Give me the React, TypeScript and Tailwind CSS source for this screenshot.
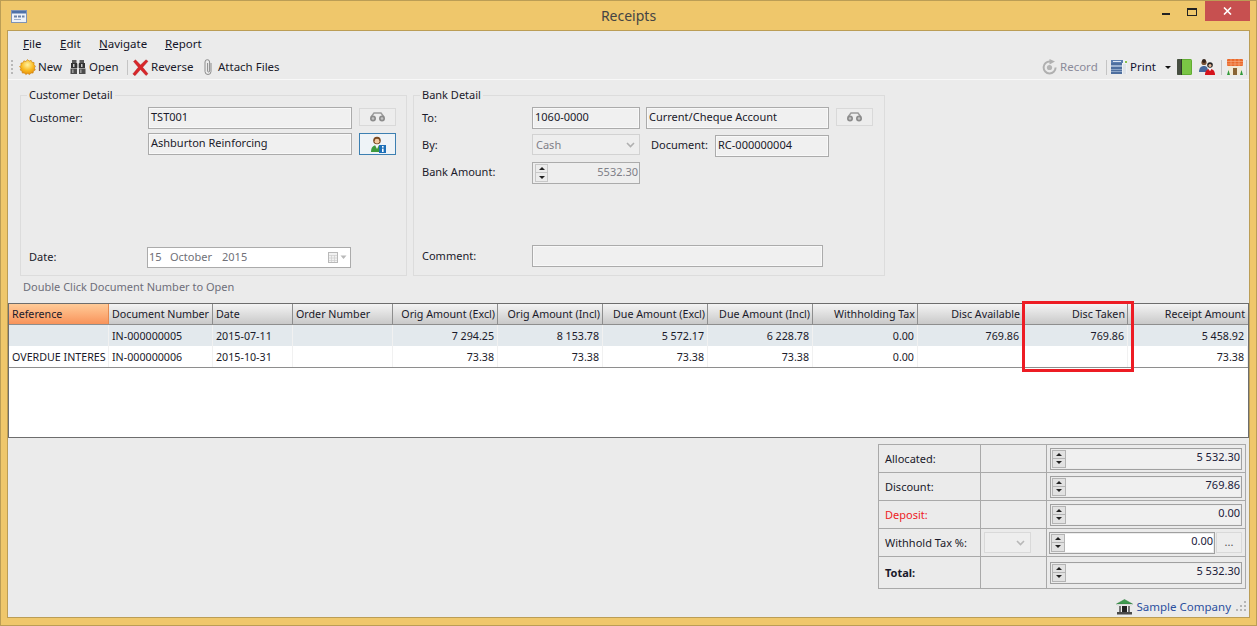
import React from "react";

const F = "[font-family:'Noto_Sans','Liberation_Sans',sans-serif]";

function Sun() {
  return (
    <svg width="17" height="17" viewBox="0 0 17 17">
      <defs>
        <radialGradient id="sg" cx="50%" cy="35%" r="70%">
          <stop offset="0" stopColor="#fff2a0" />
          <stop offset="0.55" stopColor="#f9b91f" />
          <stop offset="1" stopColor="#e0840c" />
        </radialGradient>
      </defs>
      <path d="M8.5 .5l1.6 1.6 2-.8.9 2 2.1.3-.1 2.2 1.5 1.5-1.2 1.7 1 2-1.9 1-.3 2.1-2.1-.1-1.4 1.6-1.9-1.1-1.9 1.1-1.4-1.6-2.1.1-.3-2.1-1.9-1 1-2L.5 7.8 2 6.3l-.1-2.2 2.1-.3.9-2 2 .8z" fill="url(#sg)" stroke="#c9800f" strokeWidth=".6" />
    </svg>
  );
}
function Binoculars() {
  return (
    <svg width="16" height="16" viewBox="0 0 16 16">
      <rect x="2" y="1" width="4.5" height="3" fill="#5a5a5a" />
      <rect x="9.5" y="1" width="4.5" height="3" fill="#5a5a5a" />
      <rect x="1" y="4" width="6" height="5" fill="#333" />
      <rect x="9" y="4" width="6" height="5" fill="#333" />
      <rect x="7" y="4.5" width="2" height="4.5" fill="#b5b5b5" />
      <rect x="3" y="5" width="1.5" height="3" fill="#c8c8c8" />
      <rect x="11" y="5" width="1.5" height="3" fill="#c8c8c8" />
      <rect x="0.5" y="9.5" width="6.5" height="5.5" fill="#4d4d4d" />
      <rect x="9" y="9.5" width="6.5" height="5.5" fill="#4d4d4d" />
      <rect x="2" y="10.5" width="1.6" height="3.5" fill="#999" />
      <rect x="10" y="10.5" width="1.6" height="3.5" fill="#999" />
    </svg>
  );
}
function RedX() {
  return (
    <svg width="17" height="17" viewBox="0 0 17 17">
      <path d="M1.5 2.5L3.5 .8 8.5 6 14 .8l2 1.5-5.3 6 5.3 6.5-2 1.7-5.5-6-5.5 6.2L.8 15l5.5-6.7z" fill="#d8262a" stroke="#a81a1c" strokeWidth=".4" />
    </svg>
  );
}
function Clip() {
  return (
    <svg width="10" height="16" viewBox="0 0 10 16" fill="none" stroke="#8c8c8c" strokeWidth="1">
      <path d="M8 4v8.5a3 3 0 0 1-6 0V3a2.3 2.3 0 0 1 4.6 0v9a1 1 0 0 1-2 0V4" />
    </svg>
  );
}
function RecordIcon() {
  return (
    <svg width="15" height="16" viewBox="0 0 15 16">
      <path d="M8 2.4a6 6 0 1 0 5.6 6" fill="none" stroke="#b0b0b0" strokeWidth="2" />
      <circle cx="7.5" cy="8.5" r="2.6" fill="#b4b4b4" />
      <path d="M7.5 0l5.5 2.6-5.5 2.9z" fill="#b0b0b0" />
    </svg>
  );
}
function PrintIcon() {
  return (
    <svg width="16" height="14" viewBox="0 0 16 14">
      <rect x="0" y="0" width="16" height="14" fill="#eef1f5" />
      <rect x="0" y="0" width="12" height="3" fill="#5d7fb0" />
      <rect x="2" y="1" width="8" height="1" fill="#dce6f2" />
      <rect x="0" y="3" width="11" height="11" fill="#4e6f9f" />
      <rect x="0" y="5" width="11" height="2" fill="#9db3d1" />
      <rect x="0" y="9" width="11" height="1" fill="#8ca5c7" />
      <rect x="0" y="11" width="11" height="1" fill="#8ca5c7" />
      <rect x="14" y="1" width="2" height="2" fill="#8bc34a" />
      <rect x="12" y="4" width="3" height="10" fill="#dfe3e8" />
    </svg>
  );
}
function BookIcon() {
  return (
    <svg width="15" height="16" viewBox="0 0 15 16">
      <rect x="0" y="0" width="15" height="16" rx="1.5" fill="#62ad33" />
      <rect x="0" y="0" width="4" height="16" rx="1" fill="#474f42" />
      <rect x="5" y="1" width="9" height="14" fill="#7ac545" />
      <rect x="4" y="0" width="1" height="16" fill="#2f3a2a" />
    </svg>
  );
}
function PeopleIcon() {
  return (
    <svg width="17" height="17" viewBox="0 0 17 17">
      <circle cx="5" cy="3.5" r="2.6" fill="#7a5234" />
      <circle cx="5" cy="2" r="2" fill="#33231a" />
      <path d="M0 13c0-4 2-6 5-6s4 2 4 6z" fill="#46679c" />
      <circle cx="11" cy="6" r="2.8" fill="#222" />
      <circle cx="11" cy="6.6" r="1.5" fill="#e9b896" />
      <path d="M6 16c0-4 2-6 5-6s5 2 5 6z" fill="#d5141c" />
      <rect x="10" y="9.5" width="2" height="2" fill="#f3f3f3" />
    </svg>
  );
}
function HouseIcon() {
  return (
    <svg width="16" height="16" viewBox="0 0 16 16">
      <rect x="1" y="7" width="14" height="9" fill="#f2ead6" />
      <rect x="0" y="0" width="16" height="7" rx="1" fill="#ea6a2c" />
      <path d="M0 2.5h16M0 5h16M4 0v7M8 0v7M12 0v7" stroke="#f8b48c" strokeWidth=".6" />
      <rect x="6" y="9" width="4" height="7" fill="#8a6434" />
      <path d="M0 16l1.5-5 1.5 5zM13 16l1.5-5 1.5 5z" fill="#2f9a3a" />
    </svg>
  );
}
function WinIcon() {
  return (
    <svg width="16" height="13" viewBox="0 0 16 13">
      <rect x=".5" y=".5" width="15" height="12" fill="#eef2f8" stroke="#7f93b5" />
      <rect x="1" y="1" width="14" height="2.5" fill="#4e71a8" />
      <rect x="3" y="5.5" width="3" height="2" fill="#6d83a8" />
      <rect x="7" y="5.5" width="3" height="2" fill="#6d83a8" />
      <rect x="11" y="5.5" width="2.5" height="2" fill="#6d83a8" />
      <rect x="3" y="9" width="7" height="1" fill="#9fb0ca" />
    </svg>
  );
}
function Glasses() {
  return (
    <svg width="17" height="10" viewBox="0 0 17 10">
      <path d="M2 5L5 1h7l3 4" fill="none" stroke="#9a9a9a" strokeWidth="1.4" />
      <circle cx="4" cy="6.5" r="3" fill="#8c8c8c" />
      <circle cx="13" cy="6.5" r="3" fill="#8c8c8c" />
      <circle cx="4" cy="6.5" r="1.3" fill="#c4c4c4" />
      <circle cx="13" cy="6.5" r="1.3" fill="#c4c4c4" />
    </svg>
  );
}
function PersonInfo() {
  return (
    <svg width="16" height="17" viewBox="0 0 16 17">
      <circle cx="7" cy="4.5" r="3.8" fill="#7a4a22" />
      <circle cx="7" cy="5.2" r="2.4" fill="#f2c9a0" />
      <path d="M1 16c0-5 2.5-7 6-7s6 2 6 7z" fill="#3d9a3d" />
      <path d="M5 9h4l-2 4z" fill="#f5f5f5" />
      <rect x="9" y="9" width="7" height="8" fill="#1c6fb8" />
      <rect x="12" y="10" width="1.6" height="1.6" fill="#fff" />
      <rect x="12" y="12.6" width="1.6" height="3.4" fill="#fff" />
    </svg>
  );
}
function BankIcon() {
  return (
    <svg width="17" height="16" viewBox="0 0 17 16">
      <path d="M8.5 .5L16.5 5H.5z" fill="#3f9a4f" stroke="#2e7a3c" strokeWidth=".5" />
      <rect x="1" y="5" width="15" height="1.5" fill="#d8d8d8" />
      <rect x="3" y="6.5" width="11" height="6.5" fill="#f1f1f1" />
      <rect x="6" y="7" width="5" height="6" fill="#222" />
      <rect x="3" y="7" width="2" height="6" fill="#777" />
      <rect x="12" y="7" width="2" height="6" fill="#777" />
      <rect x="1" y="13" width="15" height="2.5" fill="#4a4a4a" />
    </svg>
  );
}
function Chevron({ color = "#aaa" }: { color?: string }) {
  return (
    <svg width="9" height="6" viewBox="0 0 9 6" fill="none" stroke={color} strokeWidth="1.6">
      <path d="M1 1l3.5 3.5L8 1" />
    </svg>
  );
}
function Grip() {
  return (
    <svg width="11" height="11" viewBox="0 0 11 11" fill="#b5b5b5">
      <rect x="8" y="0" width="2" height="2" />
      <rect x="4" y="4" width="2" height="2" />
      <rect x="8" y="4" width="2" height="2" />
      <rect x="0" y="8" width="2" height="2" />
      <rect x="4" y="8" width="2" height="2" />
      <rect x="8" y="8" width="2" height="2" />
    </svg>
  );
}

function Text({ w, h = 22, children }: { w: number; h?: number; children?: React.ReactNode }) {
  return (
    <div
      style={{ width: w, height: h }}
      className="shrink-0 border border-[#ababab] shadow-[inset_0_0_0_1px_#f8f8f8] bg-[#f0f0f0] pl-[2px] flex items-center text-[#1a1a2a] pb-[1px]"
    >
      {children}
    </div>
  );
}
function GlassBtn() {
  return (
    <div className="w-[37px] h-[18px] mt-[1px] shrink-0 flex items-center justify-center border border-[#d9d9d9] bg-[#ededed]">
      <Glasses />
    </div>
  );
}
function Spin({ big }: { big?: boolean }) {
  const c = big
    ? "w-[14px] h-[9px] bg-[#e2e2e2] border border-[#b4b4b4]"
    : "w-[13px] h-[9px] bg-[#ececec] border border-[#c8c8c8]";
  return (
    <div className="flex flex-col shrink-0">
      <div className={`${c} flex items-center justify-center`}>
        <div className="w-0 h-0 border-l-[3px] border-r-[3px] border-b-[3px] border-l-transparent border-r-transparent border-b-[#222]" />
      </div>
      <div className={`${c} -mt-[1px] h-[10px] flex items-center justify-center`}>
        <div className="w-0 h-0 border-l-[3px] border-r-[3px] border-t-[3px] border-l-transparent border-r-transparent border-t-[#222]" />
      </div>
    </div>
  );
}
function Amount({ v, white }: { v: string; white?: boolean }) {
  return (
    <div
      className={`h-[22px] flex-1 border border-[#a0a0a0] ${white ? "bg-white" : "bg-[#f0f0f0]"} pl-[1px] flex items-center shadow-[inset_0_0_0_1px_#ececec]`}
    >
      <Spin big />
      <div className="flex-1 text-right self-start leading-[16px] pr-[1px] text-[#20203a]">{v}</div>
    </div>
  );
}

const cols = "grid-cols-[100px_104px_80px_100px_105px_105px_105px_105px_105px_105px_105px_120px]";
const headers: [string, boolean][] = [
  ["Reference", false],
  ["Document Number", false],
  ["Date", false],
  ["Order Number", false],
  ["Orig Amount (Excl)", true],
  ["Orig Amount (Incl)", true],
  ["Due Amount (Excl)", true],
  ["Due Amount (Incl)", true],
  ["Withholding Tax", true],
  ["Disc Available", true],
  ["Disc Taken", true],
  ["Receipt Amount", true],
];
const rows = [
  ["", "IN-000000005", "2015-07-11", "", "7 294.25", "8 153.78", "5 572.17", "6 228.78", "0.00", "769.86", "769.86", "5 458.92"],
  ["OVERDUE INTERES", "IN-000000006", "2015-10-31", "", "73.38", "73.38", "73.38", "73.38", "0.00", "", "", "73.38"],
];

function TotalRow({
  label,
  v,
  red,
  bold,
  tax,
  last,
}: {
  label: string;
  v: string;
  red?: boolean;
  bold?: boolean;
  tax?: boolean;
  last?: boolean;
}) {
  return (
    <div className={`flex ${last ? "h-[31px]" : "h-[28px] border-b border-[#a9a9a9]"}`}>
      <div
        className={`w-[102px] border-r border-[#a9a9a9] pl-[6px] pt-[2px] flex items-center ${red ? "text-[#ee1c25]" : "text-[#1a1a2a]"} ${bold ? "font-bold" : ""}`}
      >
        {label}
      </div>
      <div className="w-[66px] border-r border-[#a9a9a9] flex items-center pl-[3px]">
        {tax && (
          <div className="w-[47px] h-[21px] border border-[#d9d9d9] bg-[#eeeeee] flex items-center justify-end pr-[5px]">
            <Chevron color="#b8b8b8" />
          </div>
        )}
      </div>
      <div className={`flex-1 flex items-center ${tax ? "pl-[2px]" : "pl-[3px]"} pr-[3px] gap-[1px]`}>
        <Amount v={v} white={tax} />
        {tax && (
          <div className="w-[26px] h-[21px] border border-[#d9d9d9] bg-[#ededed] flex items-center justify-center text-[#555]">...</div>
        )}
      </div>
    </div>
  );
}

export default function App() {
  return (
    <div className={`w-[1257px] h-[626px] overflow-hidden bg-[#efc76b] border border-[#bb9d55] ${F} text-[11px] text-[#1a1a2a] flex flex-col`}>
      {/* title bar */}
      <div className="h-[29px] shrink-0 grid grid-cols-[1fr_auto_1fr] items-start">
        <div className="pt-[9px] pl-[10px]">
          <WinIcon />
        </div>
        <div className="text-center text-[14px] text-[#444] pt-[4px]">Receipts</div>
        <div className="flex items-start justify-end mr-[6px]">
          <div className="w-[8px] h-[2px] mt-[12px] mr-[17px] bg-[#222]" />
          <div className="w-[10px] h-[8px] mt-[7px] mr-[8px] border border-t-2 border-[#222]" />
          <div className="w-[45px] h-[20px] bg-[#c75050] flex items-center justify-center text-white">
            <svg width="9" height="8" viewBox="0 0 9 8" stroke="#fff" strokeWidth="1.6">
              <path d="M1 .5l7 7M8 .5l-7 7" />
            </svg>
          </div>
        </div>
      </div>

      {/* body */}
      <div className="mx-[6px] mb-[7px] flex-1 min-h-0 bg-[#ebebeb] border border-[#bb9d55] flex flex-col">
        {/* menu */}
        <div className="h-[25px] flex items-center pl-[15px] text-[#141428] text-[11.5px]">
          <span className="w-[37px]"><u>F</u>ile</span>
          <span className="w-[39px]"><u>E</u>dit</span>
          <span className="w-[66px]"><u>N</u>avigate</span>
          <span><u>R</u>eport</span>
        </div>
        {/* toolbar */}
        <div className="h-[24px] flex items-center pl-[3px] pr-[2px] pb-px border-b border-[#f8f8f8] text-[11.5px]">
          <div className="w-[2px] h-[14px] mr-[6px] border-l-2 border-dotted border-[#b8b8b8]" />
          <Sun />
          <span className="ml-[2px] w-[32px]">New</span>
          <Binoculars />
          <span className="ml-[3px] w-[38px]">Open</span>
          <div className="w-px h-[15px] bg-[#c4c4c4] mr-[4px]" />
          <RedX />
          <span className="ml-[2px] w-[52px]">Reverse</span>
          <Clip />
          <span className="ml-[5px]">Attach Files</span>
          <div className="flex-1" />
          <RecordIcon />
          <span className="ml-[3px] w-[46px] text-[#8a8a99]">Record</span>
          <div className="w-px h-[15px] bg-[#c4c4c4] mr-[4px]" />
          <PrintIcon />
          <span className="ml-[3px] w-[35px] text-[#101030]">Print</span>
          <div className="w-0 h-0 border-l-[3px] border-r-[3px] border-t-[3px] border-l-transparent border-r-transparent border-t-[#111]" />
          <div className="ml-[6px]"><BookIcon /></div>
          <div className="ml-[7px]"><PeopleIcon /></div>
          <div className="w-px h-[15px] bg-[#c4c4c4] ml-[5px] mr-[5px]" />
          <HouseIcon />
          <div className="w-px h-[15px] bg-[#c4c4c4] ml-[3px]" />
        </div>

        {/* groups */}
        <div className="flex pl-[12px] gap-[6px] mt-[15px]">
          <fieldset className="w-[387px] h-[181px] border border-[#dcdcdc] relative shrink-0">
            <div className="absolute -top-[8px] left-[6px] px-[2px] bg-[#ebebeb] leading-[14px]">Customer Detail</div>
            <div className="flex flex-col h-full pl-[8px] pt-[11px]">
              <div className="flex items-start">
                <div className="w-[119px] leading-[22px]">Customer:</div>
                <Text w={204}>TST001</Text>
                <div className="ml-[7px]"><GlassBtn /></div>
              </div>
              <div className="flex items-start mt-[4px] pl-[119px]">
                <Text w={204}>Ashburton Reinforcing</Text>
                <div className="ml-[7px] w-[37px] h-[22px] shrink-0 flex items-center justify-center border border-[#3c7fb1] bg-[#eef3f7]">
                  <PersonInfo />
                </div>
              </div>
              <div className="flex-1" />
              <div className="flex items-center mb-[7px]">
                <div className="w-[118px]">Date:</div>
                <div className="w-[204px] h-[21px] border border-[#ababab] bg-white flex items-center pl-px pr-[3px] text-[#707078]">
                  <span className="w-[21px]">15</span>
                  <span className="w-[52px]">October</span>
                  <span>2015</span>
                  <div className="flex-1" />
                  <svg width="19" height="11" viewBox="0 0 19 11">
                    <rect x=".5" y=".5" width="9" height="10" fill="#f2f2f2" stroke="#b9b9b9" />
                    <path d="M1 3.5h8M1 6h8M1 8.5h8M3.5 3v7M6.5 3v7" stroke="#cfcfcf" strokeWidth=".7" />
                    <path d="M12.5 3.5h6l-3 3.5z" fill="#b9b9b9" />
                  </svg>
                </div>
              </div>
            </div>
          </fieldset>

          <fieldset className="w-[472px] h-[181px] border border-[#dcdcdc] relative shrink-0">
            <div className="absolute -top-[8px] left-[6px] px-[2px] bg-[#ebebeb] leading-[14px]">Bank Detail</div>
            <div className="flex flex-col h-full pl-[8px] pt-[11px]">
              <div className="flex items-start">
                <div className="w-[110px] leading-[22px]">To:</div>
                <Text w={108}>1060-0000</Text>
                <div className="ml-[6px]"><Text w={183}>Current/Cheque Account</Text></div>
                <div className="ml-[7px]"><GlassBtn /></div>
              </div>
              <div className="flex items-start mt-[6px]">
                <div className="w-[110px] leading-[20px]">By:</div>
                <div className="w-[108px] h-[21px] -mt-[1px] border border-[#d2d2d2] bg-[#eeeeee] flex items-center pl-[3px] pr-[4px] pt-[1px] justify-between text-[#808088]">
                  Cash
                  <Chevron color="#b0b0b0" />
                </div>
                <div className="w-[75px] pl-[11px] leading-[20px]">Document:</div>
                <Text w={114}>RC-000000004</Text>
              </div>
              <div className="flex items-start mt-[5px]">
                <div className="w-[110px] leading-[20px]">Bank Amount:</div>
                <div className="w-[108px] h-[22px] border border-[#ababab] bg-[#eeeeee] flex items-center pl-[2px] pr-[1px]">
                  <Spin />
                  <div className="flex-1 text-right text-[#808088] pb-[1px]">5532.30</div>
                </div>
              </div>
              <div className="flex-1" />
              <div className="flex items-center mb-[8px]">
                <div className="w-[110px]">Comment:</div>
                <Text w={291} />
              </div>
            </div>
          </fieldset>
        </div>

        <div className="pl-[15px] mt-[1px] h-[19px] leading-[19px] text-[#6e6e7a]">Double Click Document Number to Open</div>
        <div className="h-[7px]" />

        {/* table */}
        <div className="h-[135px] shrink-0 bg-white border border-[#6d6d6d] relative text-[10.7px]">
          <div className={`grid ${cols} h-[21px] border-b border-[#8e8e8e]`}>
            {headers.map(([h, right], i) => (
              <div
                key={h}
                className={`flex items-center pl-[3px] border-r border-[#8e8e8e] whitespace-nowrap overflow-hidden last:border-r-0 ${
                  right ? "justify-end pr-[2px] last:pr-[3px]" : ""
                } ${i === 0 ? "bg-gradient-to-b from-[#ffcb98] to-[#f8935a] border-[#e58a50]" : "bg-gradient-to-b from-[#f4f4f4] to-[#c9c9c9]"}`}
              >
                {h}
              </div>
            ))}
          </div>
          {rows.map((r, ri) => (
            <div key={ri} className={`grid ${cols} ${ri === 0 ? "h-[21px] bg-[#e3e9ed]" : "h-[22px] bg-white border-b border-[#8e8e8e]"}`}>
              {r.map((c, i) => (
                <div key={i} className={`flex items-center pl-[3px] pt-[2px] border-r border-[#f1f1f1] whitespace-nowrap overflow-hidden ${i >= 4 ? "justify-end pr-[3px]" : ""}`}>
                  {c}
                </div>
              ))}
            </div>
          ))}
          <div className="absolute left-[1013px] -top-[3px] w-[112px] h-[71px] border-[3px] border-[#ed1c24]" />
        </div>

        {/* totals */}
        <div className="flex justify-end pr-[3px] mt-[6px]">
          <div className="w-[368px] border border-[#a9a9a9]">
            <TotalRow label="Allocated:" v="5 532.30" />
            <TotalRow label="Discount:" v="769.86" />
            <TotalRow label="Deposit:" v="0.00" red />
            <TotalRow label="Withhold Tax %:" v="0.00" tax />
            <TotalRow label="Total:" v="5 532.30" bold last />
          </div>
        </div>

        {/* status */}
        <div className="flex-1 flex items-center justify-end pr-[2px] pt-[7px] gap-[3px] text-[#2b4f9e] text-[11.5px]">
          <BankIcon />
          <span className="mr-[2px]">Sample Company</span>
          <Grip />
        </div>
      </div>
    </div>
  );
}
